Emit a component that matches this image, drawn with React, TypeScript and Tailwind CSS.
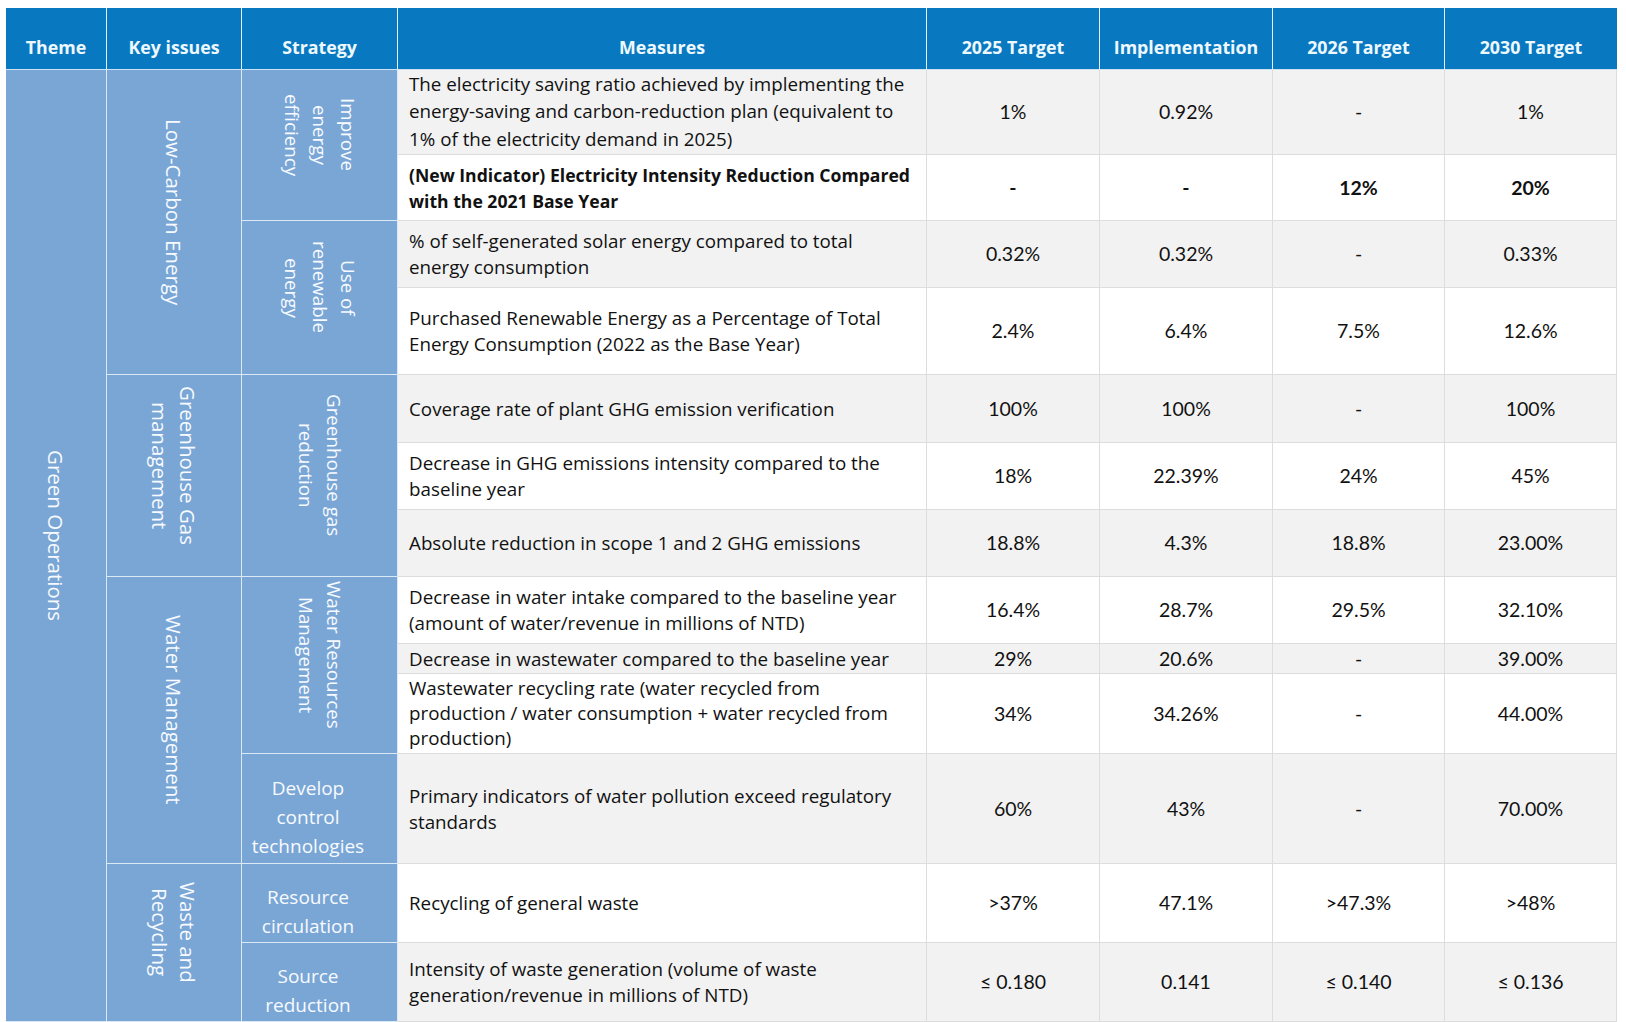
import React from "react";

type Row = {
  h: string;
  bg: string;
  lead?: React.ReactNode;
  measure: string;
  vals: string[];
  bold?: boolean;
  lh?: string;
};

const blueCell =
  "bg-[#7aa6d5] text-[#f7faff] border-r border-b border-[#dbe8f5] align-middle p-0";

const Vert = ({ lines, small }: { lines: string[]; small?: boolean }) => (
  <div className="flex justify-center items-center pb-5">
    <div
      className={`[writing-mode:vertical-rl] text-center whitespace-nowrap leading-[28px] ${
        small ? "text-[18.8px]" : "text-[20.5px]"
      }`}
    >
      {lines.map((l, i) => (
        <React.Fragment key={i}>
          {l}
          {i < lines.length - 1 && <br />}
        </React.Fragment>
      ))}
    </div>
  </div>
);

const Horiz = ({ lines }: { lines: string[] }) => (
  <div className="text-center text-[19px] leading-[29px] pt-[18px] pr-[23px]">
    {lines.map((l, i) => (
      <div key={i}>{l}</div>
    ))}
  </div>
);

const rows: Row[] = [
  {
    h: "h-[85px]",
    bg: "bg-[#f2f2f2]",
    lh: "leading-[27.5px]",
    lead: (
      <>
        <td rowSpan={13} className={blueCell}>
          <Vert lines={["Green Operations"]} />
        </td>
        <td rowSpan={4} className={blueCell}>
          <Vert lines={["Low-Carbon Energy"]} />
        </td>
        <td rowSpan={2} className={blueCell}>
          <Vert small lines={["Improve", "energy", "efficiency"]} />
        </td>
      </>
    ),
    measure:
      "The electricity saving ratio achieved by implementing the energy-saving and carbon-reduction plan (equivalent to 1% of the electricity demand in 2025)",
    vals: ["1%", "0.92%", "-", "1%"],
  },
  {
    h: "h-[66px]",
    bg: "bg-white",
    measure: "(New Indicator) Electricity Intensity Reduction Compared with the 2021 Base Year",
    vals: ["-", "-", "12%", "20%"],
    bold: true,
  },
  {
    h: "h-[67px]",
    bg: "bg-[#f2f2f2]",
    lead: (
      <td rowSpan={2} className={blueCell}>
        <Vert small lines={["Use of", "renewable", "energy"]} />
      </td>
    ),
    measure: "% of self-generated solar energy compared to total energy consumption",
    vals: ["0.32%", "0.32%", "-", "0.33%"],
  },
  {
    h: "h-[87px]",
    bg: "bg-white",
    measure:
      "Purchased Renewable Energy as a Percentage of Total Energy Consumption (2022 as the Base Year)",
    vals: ["2.4%", "6.4%", "7.5%", "12.6%"],
  },
  {
    h: "h-[68px]",
    bg: "bg-[#f2f2f2]",
    lead: (
      <>
        <td rowSpan={3} className={blueCell}>
          <Vert lines={["Greenhouse Gas", "management"]} />
        </td>
        <td rowSpan={3} className={blueCell}>
          <Vert small lines={["Greenhouse gas", "reduction"]} />
        </td>
      </>
    ),
    measure: "Coverage rate of plant GHG emission verification",
    vals: ["100%", "100%", "-", "100%"],
  },
  {
    h: "h-[67px]",
    bg: "bg-white",
    measure: "Decrease in GHG emissions intensity compared to the baseline year",
    vals: ["18%", "22.39%", "24%", "45%"],
  },
  {
    h: "h-[67px]",
    bg: "bg-[#f2f2f2]",
    measure: "Absolute reduction in scope 1 and 2 GHG emissions",
    vals: ["18.8%", "4.3%", "18.8%", "23.00%"],
  },
  {
    h: "h-[67px]",
    bg: "bg-white",
    lead: (
      <>
        <td rowSpan={4} className={blueCell}>
          <Vert lines={["Water Management"]} />
        </td>
        <td rowSpan={3} className={blueCell}>
          <Vert small lines={["Water Resources", "Management"]} />
        </td>
      </>
    ),
    measure:
      "Decrease in water intake compared to the baseline year (amount of water/revenue in millions of NTD)",
    vals: ["16.4%", "28.7%", "29.5%", "32.10%"],
  },
  {
    h: "h-[30px]",
    bg: "bg-[#f2f2f2]",
    measure: "Decrease in wastewater compared to the baseline year",
    vals: ["29%", "20.6%", "-", "39.00%"],
  },
  {
    h: "h-[80px]",
    bg: "bg-white",
    lh: "leading-[25px]",
    measure:
      "Wastewater recycling rate (water recycled from production / water consumption + water recycled from production)",
    vals: ["34%", "34.26%", "-", "44.00%"],
  },
  {
    h: "h-[110px]",
    bg: "bg-[#f2f2f2]",
    lead: (
      <td className={blueCell}>
        <Horiz lines={["Develop", "control", "technologies"]} />
      </td>
    ),
    measure: "Primary indicators of water pollution exceed regulatory standards",
    vals: ["60%", "43%", "-", "70.00%"],
  },
  {
    h: "h-[79px]",
    bg: "bg-white",
    lead: (
      <>
        <td rowSpan={2} className={blueCell}>
          <Vert lines={["Waste and", "Recycling"]} />
        </td>
        <td className={blueCell}>
          <Horiz lines={["Resource", "circulation"]} />
        </td>
      </>
    ),
    measure: "Recycling of general waste",
    vals: [">37%", "47.1%", ">47.3%", ">48%"],
  },
  {
    h: "h-[79px]",
    bg: "bg-[#f2f2f2]",
    lead: (
      <td className={blueCell}>
        <Horiz lines={["Source", "reduction"]} />
      </td>
    ),
    measure:
      "Intensity of waste generation (volume of waste generation/revenue in millions of NTD)",
    vals: ["≤ 0.180", "0.141", "≤ 0.140", "≤ 0.136"],
  },
];

const headers = [
  "Theme",
  "Key issues",
  "Strategy",
  "Measures",
  "2025 Target",
  "Implementation",
  "2026 Target",
  "2030 Target",
];

export default function App() {
  return (
    <div className="min-h-screen bg-white pt-[8px] pl-[6px] font-['Open_Sans',sans-serif]">
      <table className="table-fixed border-separate border-spacing-0 w-[1611px]">
        <colgroup>
          <col className="w-[101px]" />
          <col className="w-[135px]" />
          <col className="w-[156px]" />
          <col className="w-[529px]" />
          <col className="w-[173px]" />
          <col className="w-[173px]" />
          <col className="w-[172px]" />
          <col className="w-[172px]" />
        </colgroup>
        <thead>
          <tr className="h-[62px]">
            {headers.map((h, i) => (
              <th
                key={h}
                className={`bg-[#0879c0] text-[#eef8ff] font-bold text-[17.8px] leading-[26px] align-bottom pb-[9px] border-b border-[#cfe2f2] ${
                  i < headers.length - 1 ? "border-r border-r-[#e3eef8]" : ""
                }`}
              >
                {h}
              </th>
            ))}
          </tr>
        </thead>
        <tbody>
          {rows.map((r, idx) => (
            <tr key={idx} className={r.h}>
              {r.lead}
              <td
                className={`${r.bg} border-r border-b border-[#dddddd] pl-[11px] py-0 align-middle text-[#111] ${
                  r.lh ?? "leading-[26px]"
                } ${r.bold ? "font-bold text-[17.6px] pr-[5px]" : "text-[18.8px] pr-[11px]"}`}
              >
                {r.measure}
              </td>
              {r.vals.map((v, j) => (
                <td
                  key={j}
                  className={`${r.bg} border-r border-b border-[#dddddd] p-0 text-center align-middle font-['Lato',sans-serif] text-[19.5px] leading-[26px] text-[#111] ${
                    r.bold ? "font-bold" : ""
                  }`}
                >
                  {v}
                </td>
              ))}
            </tr>
          ))}
        </tbody>
      </table>
    </div>
  );
}
